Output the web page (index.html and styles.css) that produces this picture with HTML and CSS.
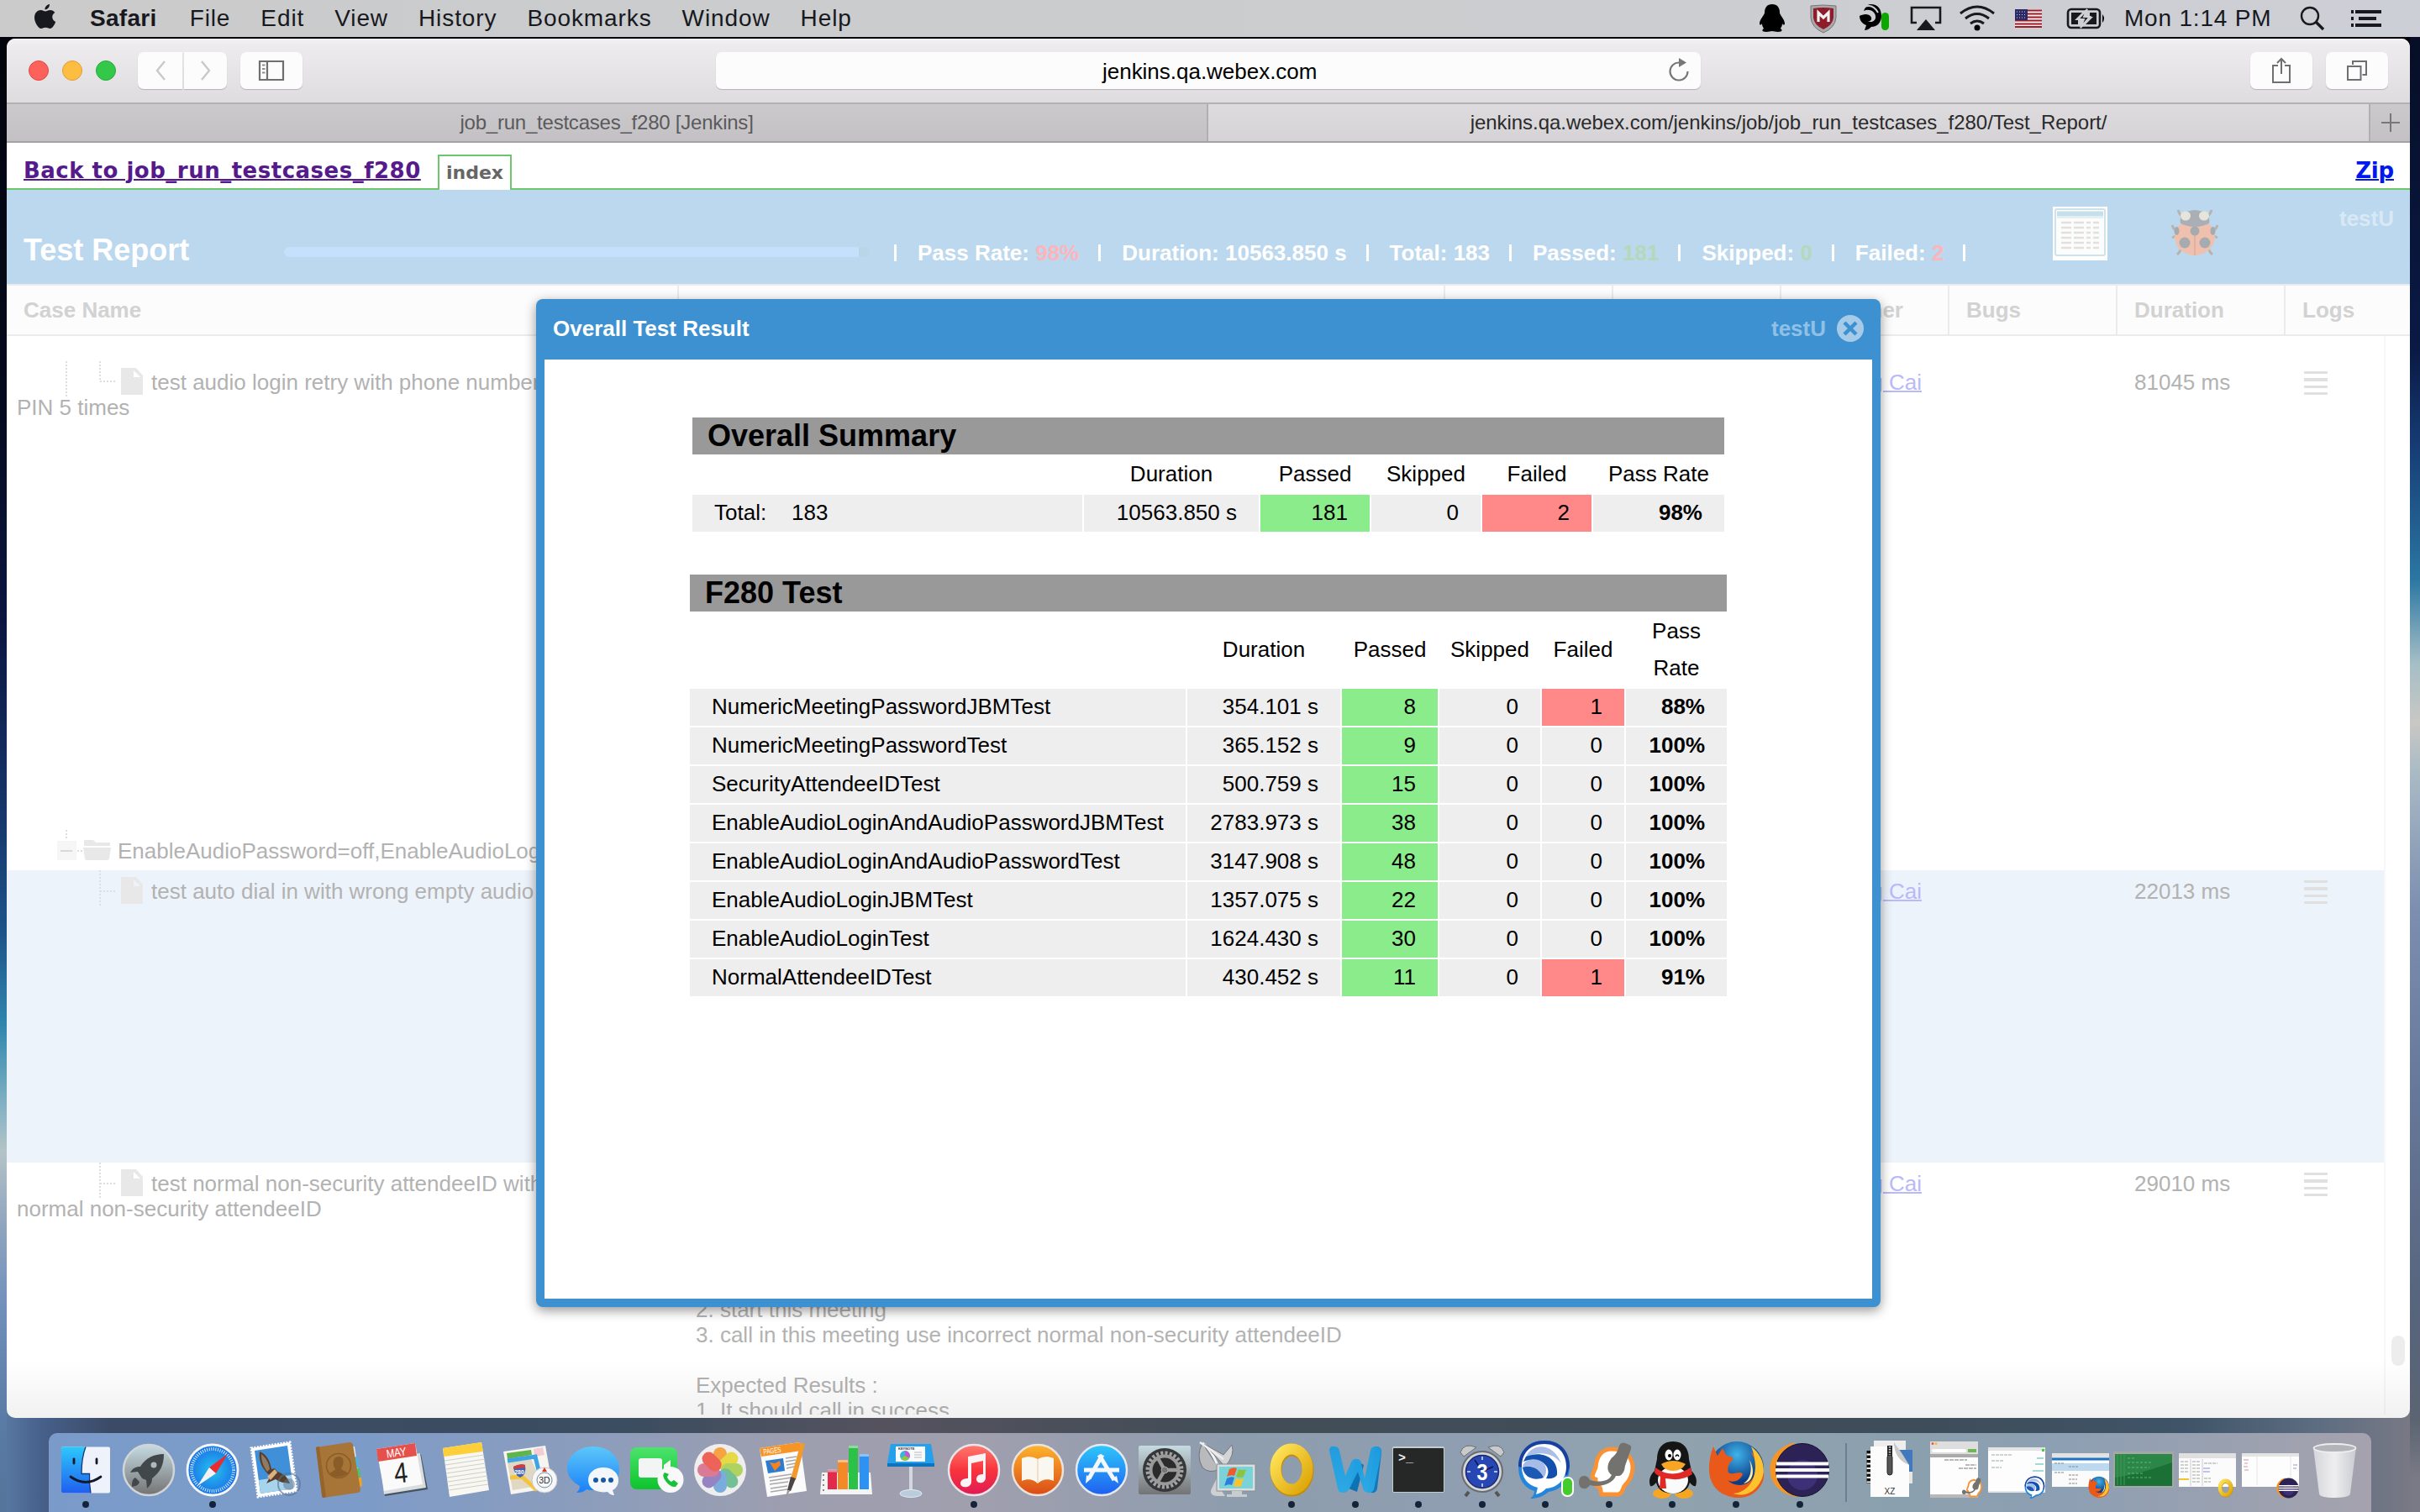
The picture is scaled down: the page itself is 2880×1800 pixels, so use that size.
FILE: index.html
```html
<!DOCTYPE html>
<html lang="en">
<head>
<meta charset="utf-8">
<title>Test Report</title>
<link rel="stylesheet" href="styles.css">
</head>
<body>
<header class="menubar">
  <svg class="apple" width="28" height="34" viewBox="0 0 28 34"><path d="M19 0c.3 3-2.500 6.500-5.500 6.500C13 3.500 16 .3 19 0zM14 8.500c1.500 0 3-1.500 6-1.500 2 0 4 1 5.300 3-4.500 2.600-3.800 9 .9 11-1.200 3.500-4 8-6.700 8-2 0-2.800-1.200-5.200-1.200S11 29 9 29C5.500 29 1 21.500 1 16 1 10 5 7 8.500 7c2.300 0 4 1.500 5.500 1.500z"/></svg>
  <nav class="menus"><b>Safari</b><span>File</span><span>Edit</span><span>View</span><span>History</span><span>Bookmarks</span><span>Window</span><span>Help</span></nav>
  <svg class="status" width="430" height="44" viewBox="2094 0 430 44">
    <path d="M2109 5c6 0 9 4 9 10 0 3 6 8 6 13 0 2-2 2-3 0 0 4-2 5-2 6 2 1 3 4-3 4-3 0-5-1-7-1s-4 1-7 1c-6 0-5-3-3-4 0-1-2-2-2-6-1 2-3 2-3 0 0-5 6-10 6-13 0-6 3-10 9-10z"/>
    <path d="M2155 7q15-2 30 0v14q-1 12-15 18-14-6-15-18z" fill="#a9a9ab" stroke="#77777b"/><path d="M2158 10q12-2 24 0v11q-1 9-12 14-11-5-12-14z" fill="#8f1c2a"/><path d="M2164 26V15l6 6 6-6v11" fill="none" stroke="#f2f2f2" stroke-width="3.200"/>
    <path d="M2226 5c9 0 13 6 13 14 0 9-6 13-12 13-3 3-6 4-8 4l2-6c-5-2-8-6-8-11 3-2 12-4 14 2 1 3-2 5-5 4 6 3 11-1 10-6-1-6-8-9-14-6 2-5 5-8 8-8z"/><path d="M2219 8q10-4 16 7" stroke="#cfd1d6" stroke-width="2" fill="none"/><rect x="2239" y="15" width="9" height="21" rx="4.500" fill="#0ca800"/>
    <path d="M2281 27h-6V9h34v18h-6" fill="none" stroke="#17191e" stroke-width="2.600"/><path d="M2281 36l11-13 11 13z" fill="#17191e"/>
    <g fill="none" stroke="#17191e" stroke-width="3"><path d="M2333 16q20-16 40 0"/><path d="M2339 22q14-11 28 0"/><path d="M2345 28q8-6 16 0"/></g><circle cx="2353" cy="33" r="3.500"/>
    <rect x="2398" y="11" width="32" height="22" fill="#f3f0f0"/><path d="M2398 12.500h32M2398 16.500h32M2398 20.500h32M2398 24.500h32M2398 28.500h32M2398 32h32" stroke="#a01a28" stroke-width="2"/><rect x="2398" y="11" width="15" height="13" fill="#2b2a66"/><path d="M2400 14h12M2400 17.500h12M2400 21h12" stroke="#c8c8e0" stroke-dasharray="1 2"/>
    <rect x="2461" y="11" width="38" height="22" rx="4" fill="none" stroke="#17191e" stroke-width="2.600"/><path d="M2502 17q4 5 0 10z"/><path d="M2465 15h13l-9 9h4v5h-8zM2495 29h-13l9-9h-4v-5h8z" fill="#17191e"/><path d="M2484 11l-11 12h7l-4 10 11-13h-7z" fill="#17191e" stroke="#cfd1d6" stroke-width="2"/>
  </svg>
  <span class="clock">Mon 1:14 PM</span>
  <svg class="search" width="100" height="44" viewBox="2736 0 100 44"><circle cx="2749" cy="19" r="10" fill="none" stroke="#17191e" stroke-width="2.400"/><path d="M2756 26l9 9" stroke="#17191e" stroke-width="3.400"/><path d="M2803 14h31M2807 22h21M2803 30h31" stroke="#17191e" stroke-width="4"/><path d="M2798 14h3M2798 22h3M2798 30h3" stroke="#17191e" stroke-width="4"/></svg>
</header>

<main class="window">
  <div class="toolbar">
    <i class="light red"></i><i class="light amber"></i><i class="light green"></i>
    <div class="nav"><span class="btn back"><svg width="14" height="26" viewBox="0 0 14 26"><path d="M12 2L3 13l9 11" fill="none" stroke="#c9c9cb" stroke-width="2.400"/></svg></span><span class="btn fwd"><svg width="14" height="26" viewBox="0 0 14 26"><path d="M2 2l9 11-9 11" fill="none" stroke="#c9c9cb" stroke-width="2.400"/></svg></span></div>
    <span class="btn side"><svg width="32" height="26" viewBox="0 0 32 26"><path d="M2 2h28v22H2zM11 2v22" fill="none" stroke="#6f6f72" stroke-width="2.200"/><path d="M5 6.500h3.500M5 11h3.500M5 15.500h3.500" stroke="#8f8f92" stroke-width="2.200"/></svg></span>
    <div class="url"><span>jenkins.qa.webex.com</span><svg width="28" height="30" viewBox="0 0 28 30"><path d="M14.500 5.500a10.500 10.500 0 1 0 10 10.500" fill="none" stroke="#77777a" stroke-width="2.200"/><path d="M14 0v11l9-5.500z" fill="#77777a"/></svg></div>
    <span class="btn share"><svg width="26" height="32" viewBox="0 0 26 32"><path d="M9 10H3v20h20V10h-6M13 20V2M8 7l5-5 5 5" fill="none" stroke="#6f6f72" stroke-width="2"/></svg></span>
    <span class="btn tabsbtn"><svg width="28" height="28" viewBox="0 0 28 28"><path d="M3 9h15.500v16H3z" fill="none" stroke="#6f6f72" stroke-width="2"/><path d="M9 7V3h16v16h-4.500" fill="none" stroke="#6f6f72" stroke-width="2"/></svg></span>
  </div>
  <div class="tabs">
    <div class="tab">job_run_testcases_f280 [Jenkins]</div>
    <div class="tab active">jenkins.qa.webex.com/jenkins/job/job_run_testcases_f280/Test_Report/</div>
    <div class="tab plus"><svg width="24" height="24" viewBox="0 0 24 24"><path d="M12 1v22M1 12h22" stroke="#77777a" stroke-width="2"/></svg></div>
  </div>

  <div class="crumbs"><a class="back-link">Back to job_run_testcases_f280</a><span class="index-tab">index</span><a class="zip">Zip</a></div>

  <div class="report-head">
    <h1>Test Report</h1>
    <div class="progress"><div></div></div>
    <div class="stats">
      <i></i><span>Pass Rate: <em class="bad">98%</em></span>
      <i></i><span>Duration: 10563.850 s</span>
      <i></i><span>Total: 183</span>
      <i></i><span>Passed: <em class="good">181</em></span>
      <i></i><span>Skipped: <em class="good">0</em></span>
      <i></i><span>Failed: <em class="bad">2</em></span>
      <i></i>
    </div>
    <svg class="report-icon" width="65" height="64" viewBox="0 0 65 64"><rect width="65" height="64" fill="#fdfefe"/><rect x="3" y="3" width="59" height="55" rx="2" fill="#fbfcfc" stroke="#cfe1e9" stroke-width="2"/><path d="M5 8.500h55" stroke="#c6dfec" stroke-width="6"/><path d="M5 13h55" stroke="#e2eff3" stroke-width="2"/><g stroke="#e4dedc" stroke-width="2.500"><path d="M10 19h45M10 25h45M10 31h45M10 37h45M10 43h45M10 49h45" stroke-dasharray="12 3 12 3 5 3 7"/></g></svg>
    <svg class="bug-icon" width="56" height="58" viewBox="0 0 56 58"><g fill="none" stroke="#b7b4ae" stroke-width="3"><path d="M14 11q-4-3-6-9M42 11q4-3 6-9M8 27q-5-1-7-7M48 27q5-1 7-7M7 32l-6 3M49 32l6 3M12 46q-1 6-5 9M44 46q1 6 5 9"/></g><ellipse cx="28" cy="34" rx="24" ry="22" fill="#f0c0ae"/><path d="M28 18v38" stroke="#dcab98" stroke-width="1.500"/><path d="M11 18q-3-14 17-16 20 2 17 16-17 8-34 0z" fill="#a9afb4"/><ellipse cx="17" cy="9" rx="6" ry="5.500" fill="#e6e5dc"/><ellipse cx="39" cy="9" rx="6" ry="5.500" fill="#e6e5dc"/><g fill="#a6abaf"><circle cx="28" cy="27" r="5.500"/><circle cx="16" cy="41" r="6.500"/><circle cx="40" cy="41" r="6.500"/><ellipse cx="6.500" cy="27" rx="3" ry="5"/><ellipse cx="49.500" cy="27" rx="3" ry="5"/></g></svg>
    <span class="brand">testU</span>
  </div>

  <div class="grid grid-head"><div>Case Name</div><div></div><div></div><div></div><div class="owner">Owner</div><div>Bugs</div><div>Duration</div><div class="last">Logs</div></div>

  <div class="rows">
    <div class="grid row r1">
      <div class="case"><div class="line"><svg width="172" height="30"><path class="dots" d="M71-10v42M111-10v24h18"/><path class="ico" d="M136-2h18l8 9v23h-26z"/><path d="M151 1v8h8z" fill="#fff"/></svg><span>test audio login retry with phone number</span></div><div class="wrap">PIN 5 times</div></div>
      <div class="steps"></div><div></div><div></div><div class="owner"><a>Yang Cai</a></div><div></div><div>81045 ms</div><div class="log"><i></i></div>
    </div>
    <div class="group"><svg width="132" height="30"><path class="dots" d="M71-10v12M84 15h8"/><path d="M60 3h23v23H60z" fill="#f6f6f6"/><path d="M64 15h14" stroke="#d5d9e0" stroke-width="2"/><path class="ico" d="M92 3q0-1 2-1h9l3 3h17v4H92zM91 11h33l-2 13q-.3 2-2 2H95q-2 0-2-2z"/></svg><span>EnableAudioPassword=off,EnableAudioLog</span></div>
    <div class="grid row r2">
      <div class="case"><div class="line"><svg width="172" height="30"><path class="dots" d="M111-10v44M111 15h18"/><path class="ico" d="M136-2h18l8 9v23h-26z"/><path d="M151 1v8h8z" fill="#edf3fa"/></svg><span>test auto dial in with wrong empty audio</span></div></div>
      <div class="steps"></div><div></div><div></div><div class="owner"><a>Yang Cai</a></div><div></div><div>22013 ms</div><div class="log"><i></i></div>
    </div>
    <div class="grid row r3">
      <div class="case"><div class="line"><svg width="172" height="30"><path class="dots" d="M111-10v44M111 15h18"/><path class="ico" d="M136-2h18l8 9v23h-26z"/><path d="M151 1v8h8z" fill="#fff"/></svg><span>test normal non-security attendeeID with</span></div><div class="wrap">normal non-security attendeeID</div></div>
      <div class="steps"><p>2. start this meeting</p><p>3. call in this meeting use incorrect normal non-security attendeeID</p><p>&nbsp;</p><p>Expected Results :</p><p>1. It should call in success</p></div><div></div><div></div><div class="owner"><a>Yang Cai</a></div><div></div><div>29010 ms</div><div class="log"><i></i></div>
    </div>
  </div>
  <div class="scroll"><i></i></div>
  <div class="fade"></div>

  <section class="modal">
    <div class="modal-head"><h2>Overall Test Result</h2><span>testU</span><svg width="32" height="32" viewBox="0 0 32 32"><circle cx="16" cy="16" r="16" fill="#a5cbe9"/><path d="M9 9l14 14M23 9L9 23" stroke="#3d91d1" stroke-width="4.500"/></svg></div>
    <div class="modal-body">
      <div class="table summary">
        <h3>Overall Summary</h3>
        <div class="th"></div><div class="th">Duration</div><div class="th">Passed</div><div class="th">Skipped</div><div class="th">Failed</div><div class="th">Pass Rate</div>
        <div class="name"><span class="total">Total:</span>183</div><div>10563.850 s</div><div class="ok">181</div><div>0</div><div class="fail">2</div><div class="rate">98%</div>
      </div>
      <div class="table suite">
        <h3>F280 Test</h3>
        <div class="th"></div><div class="th">Duration</div><div class="th">Passed</div><div class="th">Skipped</div><div class="th">Failed</div><div class="th">Pass<br>Rate</div>
        <div class="name">NumericMeetingPasswordJBMTest</div><div>354.101 s</div><div class="ok">8</div><div>0</div><div class="fail">1</div><div class="rate">88%</div>
        <div class="name">NumericMeetingPasswordTest</div><div>365.152 s</div><div class="ok">9</div><div>0</div><div>0</div><div class="rate">100%</div>
        <div class="name">SecurityAttendeeIDTest</div><div>500.759 s</div><div class="ok">15</div><div>0</div><div>0</div><div class="rate">100%</div>
        <div class="name">EnableAudioLoginAndAudioPasswordJBMTest</div><div>2783.973 s</div><div class="ok">38</div><div>0</div><div>0</div><div class="rate">100%</div>
        <div class="name">EnableAudioLoginAndAudioPasswordTest</div><div>3147.908 s</div><div class="ok">48</div><div>0</div><div>0</div><div class="rate">100%</div>
        <div class="name">EnableAudioLoginJBMTest</div><div>1357.075 s</div><div class="ok">22</div><div>0</div><div>0</div><div class="rate">100%</div>
        <div class="name">EnableAudioLoginTest</div><div>1624.430 s</div><div class="ok">30</div><div>0</div><div>0</div><div class="rate">100%</div>
        <div class="name">NormalAttendeeIDTest</div><div>430.452 s</div><div class="ok">11</div><div>0</div><div class="fail">1</div><div class="rate">91%</div>
      </div>
    </div>
  </section>
</main>

<svg class="defs" width="0" height="0">
  <defs>
    <linearGradient id="gBlue" x2="0" y2="1"><stop stop-color="#2dc8fb"/><stop offset="1" stop-color="#1f5ff0"/></linearGradient>
    <linearGradient id="gGrey" x2="0" y2="1"><stop stop-color="#c6dbe2"/><stop offset="1" stop-color="#737373"/></linearGradient>
    <linearGradient id="gGreen" x2="0" y2="1"><stop stop-color="#4ce36c"/><stop offset="1" stop-color="#0dc32c"/></linearGradient>
    <linearGradient id="gRed" x2="0" y2="1"><stop stop-color="#ff7a70"/><stop offset=".5" stop-color="#f8343c"/><stop offset="1" stop-color="#e11a55"/></linearGradient>
    <linearGradient id="gOrange" x2="0" y2="1"><stop stop-color="#fdb52c"/><stop offset="1" stop-color="#db4a16"/></linearGradient>
    <linearGradient id="gMsg" x2="0" y2="1"><stop stop-color="#5cc8fa"/><stop offset="1" stop-color="#1a80f7"/></linearGradient>
    <linearGradient id="gGold" x2="1" y2="1"><stop stop-color="#ffe45a"/><stop offset="1" stop-color="#dda408"/></linearGradient>
    <linearGradient id="gW" x2="0" y2="1"><stop stop-color="#1d9ce0"/><stop offset="1" stop-color="#27a9e6"/></linearGradient>
    <linearGradient id="gTrash" x2="1" y2="0"><stop stop-color="#d5d6da"/><stop offset=".5" stop-color="#eeeef0"/><stop offset="1" stop-color="#c9cbd1"/></linearGradient>
    <radialGradient id="gSafari"><stop stop-color="#25c3ee"/><stop offset="1" stop-color="#1a6fe6"/></radialGradient>
    <radialGradient id="gFx" cx=".5" cy=".25"><stop stop-color="#3fb4ea"/><stop offset="1" stop-color="#0d3c86"/></radialGradient>
    <symbol id="outlook" viewBox="0 0 72 72"><ellipse cx="36.500" cy="36.500" rx="19" ry="24" fill="none" stroke="#c48d08" stroke-width="14"/><ellipse cx="36" cy="35" rx="19" ry="24" fill="none" stroke="url(#gGold)" stroke-width="13"/></symbol>
    <symbol id="webex" viewBox="0 0 72 72"><path d="M35 1c19 0 30 13 30 31 0 17-10 28-25 30-6 5-12 8-22 8 3-2 5-5 5-9C10 57 4 46 4 32 4 14 16 1 35 1z" fill="#2385dc"/><path d="M35 1c19 0 30 13 30 31l-3 10L4 32C4 14 16 1 35 1z" fill="#1740a0"/><path d="M35 5c16 0 26 11 26 27 0 15-10 25-24 26-4 4-8 6-12 7l2-8C14 54 8 44 8 32 8 16 18 5 35 5z" fill="#fff"/><path d="M13 20C20 4 45 2 55 28 44 14 28 14 13 20z" fill="#a9bfe8"/><path d="M13 20c20-8 39 2 37 22-3 4-8 5-13 4C46 33 30 18 10 26z" fill="#1350ad"/><path d="M9 33c1-14 28-13 28 3 0 4-1 7-3 9-6-12-16-16-25-12z" fill="#a5bce8"/><path d="M9 33c10-4 20 1 25 12-10 4-23 1-25-12z" fill="#1c59b4"/></symbol>
    <symbol id="agent" viewBox="0 0 72 72"><path d="M39 11c15 0 25 9 25 22 0 9-3 15-9 21-4 4-2 10-8 11H27c-2-4 0-8-3-9-5 0-4-5-4-9-5-2-5-3 0-14 1-14 8-22 19-22z" fill="#fff" stroke="#fa9233" stroke-width="5"/><path d="M47 10q2-8 8-6l5 2q3 1 2 5l-7 20q-1 10-7 12h-4C40 53 24 57 13 54q-3 5-8 4-5-1-5-7 0-8 6-8 5 0 7 5c12 3 22 2 26-6-6-4-6-12-1-19 3-4 7-5 9-13z" fill="#74726f"/></symbol>
    <symbol id="firefox" viewBox="0 0 72 72"><circle cx="37" cy="34" r="32" fill="url(#gFx)"/><path d="M9 8l5 11 6-9 4 8c4 2 8 2 9 5-5 4-8 10-6 16 6 4 14-3 17 2-3 8-12 11-18 7 8 9 25 8 31-4 5-10 2-22-4-30 13 9 19 23 15 35-5 14-18 21-32 20C16 67 3 53 4 33 4 24 6 16 9 8z" fill="#e8591a"/><path d="M54 8c17 13 20 34 6 49-8 9-19 10-27 7 22-2 33-26 21-56z" fill="#fcc22f"/><path d="M52 24c4 12 1 23-7 28 10-1 15-14 7-28z" fill="#fff0a8"/></symbol>
    <symbol id="eclipse" viewBox="0 0 72 72"><path d="M31 3C-12 12-8 63 33 68 12 54 10 18 31 3z" fill="#f79524"/><circle cx="39" cy="36" r="31.500" fill="#2c2255" stroke="#15112c"/><circle cx="39" cy="42" r="18" fill="#4a3b8e" opacity=".6"/><path d="M8 28.500h62M7 36h64M8 43.500h62" stroke="#fff" stroke-width="4"/></symbol>
  </defs>
</svg>

<footer class="dock">
  <div class="app on"><svg viewBox="0 0 72 72"><rect x="7" y="8.500" width="58" height="55" rx="2" fill="#eef2fa"/><path d="M36 8.500H9q-2 0-2 2v51q0 2 2 2h33q-2-11-1.500-23H31c0-12 1-22 5-32z" fill="url(#gBlue)"/><path d="M36 8.500c-4 10-5 20-5 32h9.500q-.5 12 1.500 23" fill="none" stroke="#123a77" stroke-width="1.300"/><path d="M22 23v5M49 23v5M18 44q18 13 36 0" fill="none" stroke="#111a2a" stroke-width="2.800" stroke-linecap="round"/></svg></div>
  <div class="app"><svg viewBox="0 0 72 72"><circle cx="36" cy="36" r="30" fill="url(#gGrey)" stroke="#d2d5d7" stroke-width="2.500"/><path d="M54 17c-12 0-22 5-28 15-6 0-9 2-12 7l9-1 5 8 5 2 1 10c4-4 6-7 6-12 9-7 14-15 14-29z" fill="#42474c"/><circle cx="42" cy="30" r="3.500" fill="#adb9bd"/><path d="M20 45c-4 2-4 7-4 11 5-1 8-2 9-6z" fill="#42474c"/></svg></div>
  <div class="app on"><svg viewBox="0 0 72 72"><circle cx="36" cy="36" r="30" fill="url(#gSafari)" stroke="#f5f6f8" stroke-width="2.800"/><circle cx="36" cy="36" r="25" fill="none" stroke="#c9e8fb" stroke-width="4" stroke-dasharray="1 1.620"/><path d="M54 17L32 33l8 7z" fill="#ec2b2f"/><path d="M18 55l14-22 8 7z" fill="#f3f3f3"/></svg></div>
  <div class="app"><svg viewBox="0 0 72 72"><path d="M7 10l46-7 8 58-46 7z" fill="#fff" stroke="#fff" stroke-width="3" stroke-dasharray="2 1.500"/><path d="M11 13l39-6 7 51-39 6z" fill="#3f90d8"/><path d="M16 48l39-6 2 16-39 6z" fill="#a8d3ec"/><path d="M17 14c7 3 12 9 14 21l4-1 3 4c7 2 12 6 15 14-7-1-12-1-17-5l-11 5 5-9c-9-6-15-18-13-29z" fill="#5a3e2a"/><path d="M19 17c5 4 9 10 10 18l-3 3c-5-6-7-13-7-21z" fill="#8f7a63"/><path d="M26 44l9-9 3 4-8 9z" fill="#d9b184"/><circle cx="52" cy="53" r="13" fill="none" stroke="#59718c" stroke-width="2" opacity=".6"/><circle cx="52" cy="53" r="7" fill="#59718c" opacity=".5"/></svg></div>
  <div class="app"><svg viewBox="0 0 72 72"><path d="M46 9l8-1 7 48-8 2z" fill="#e8e8e4"/><path d="M54 20l4 1 1 12-5 1z" fill="#4cb5dc"/><path d="M56 34l4 0 1 11-5 1z" fill="#52c260"/><path d="M58 45l4 0 1 10-5 1z" fill="#f3a21f"/><path d="M8 9l40-6q3 0 4 3l9 53q0 3-3 4l-41 6q-2 0-2-3z" fill="#a87539"/><path d="M8 9l4-1 8 60-3 1q-2 0-2-3z" fill="#94642b"/><circle cx="35" cy="31" r="14.500" fill="none" stroke="#8a5d28" stroke-width="1.600"/><path d="M35 20c8 0 6 11 3 14 1 3 6 3 8 6-6 5-17 6-22 1 2-3 6-4 7-6-4-6-3-15 4-15z" fill="#8a5d28"/></svg></div>
  <div class="app"><svg viewBox="0 0 72 72"><path d="M7 26l50-9 8 42-51 8z" fill="#44535c"/><path d="M8 24l48-8 7 41-50 8z" fill="#d9dde0"/><path d="M4 11l46-7 9 49-46 8z" fill="#fafafa"/><path d="M4 11l46-7 2 15-46 7z" fill="#e6504c"/><text x="28" y="20" text-anchor="middle" font-size="14" fill="#fff" transform="rotate(-8 28 18)" textLength="24" lengthAdjust="spacingAndGlyphs">MAY</text><text x="33" y="51" text-anchor="middle" font-size="34" fill="#222" transform="rotate(-6 33 40)" textLength="16" lengthAdjust="spacingAndGlyphs">4</text></svg></div>
  <div class="app"><svg viewBox="0 0 72 72"><path d="M8 10l46-7 9 57-47 8z" fill="#f8f7f2"/><path d="M8 10l46-7 2 11-47 6z" fill="#fdcf3b"/><path d="M10 25l47-7M11 30l47-7M12 35l47-7M12 40l47-7M13 45l47-7M14 50l47-7M15 55l47-7M15 60l47-7" stroke="#cfcfca" stroke-width="1.200"/></svg></div>
  <div class="app"><svg viewBox="0 0 72 72"><path d="M4 14l50-7 9 50-50 8z" fill="#f6f5ef"/><path d="M8 16l29-4 1 6-29 5z" fill="#5fb549"/><path d="M40 11l11-2 2 9-12 2z" fill="#f3ccd4"/><path d="M9 27l28-4 14 31-36 6z" fill="#e1d8c4"/><path d="M9 25l33-5 9 37" fill="none" stroke="#3ea4e6" stroke-width="5"/><path d="M12 45l14-1 18 16" fill="none" stroke="#f6c33c" stroke-width="5"/><path d="M16 32q8-4 14-2 2 12-6 15-7-3-8-13z" fill="#3d63b5"/><path d="M16 32q8-4 14-2v3l-14 2z" fill="#cf3c44"/><text x="23" y="41" text-anchor="middle" font-size="7" font-weight="bold" fill="#fff">280</text><circle cx="53" cy="48" r="15" fill="#f7f7f7" stroke="#c7c7c7"/><circle cx="53" cy="48" r="9" fill="none" stroke="#6b8fa0"/><text x="53" y="52" text-anchor="middle" font-size="10.500" fill="#333">3D</text><path d="M50 38l3-5 3 5z" fill="#d32"/></svg></div>
  <div class="app"><svg viewBox="0 0 72 72"><path d="M36 8c17 0 31 11 31 27S54 60 38 60c-4 0-7 0-10-1-3 3-7 4-12 4 3-3 4-5 4-8C11 50 5 43 5 34 5 19 19 8 36 8z" fill="url(#gMsg)"/><path d="M48 33c10 0 18 6 18 15 0 6-3 10-7 12l2 6c-3 0-5-1-8-4-13 2-23-4-23-14 0-9 8-15 18-15z" fill="#f3f7fb"/><g fill="#1459a8"><circle cx="39" cy="48" r="3"/><circle cx="48" cy="48" r="3"/><circle cx="57" cy="48" r="3"/></g></svg></div>
  <div class="app"><svg viewBox="0 0 72 72"><rect x="4" y="9" width="56" height="50" rx="8" fill="url(#gGreen)"/><rect x="14" y="22" width="28" height="23" rx="3" fill="#f2f5f3"/><path d="M44 30l8-6v17l-8-5z" fill="#f2f5f3"/><circle cx="52" cy="47.500" r="15.500" fill="#f8f9f8"/><path d="M45 39q-4 3 1 10 6 8 12 7l3-4-5-4-3 2q-4-2-5-6l2-3z" fill="#17c23a"/></svg></div>
  <div class="app"><svg viewBox="0 0 72 72"><circle cx="36" cy="36" r="31" fill="#efeeee"/><g opacity=".88"><rect x="28" y="9" width="16" height="26" rx="8" fill="#f8992c"/><rect x="28" y="9" width="16" height="26" rx="8" fill="#e7d62f" transform="rotate(45 36 36)"/><rect x="28" y="9" width="16" height="26" rx="8" fill="#a8cf4b" transform="rotate(90 36 36)"/><rect x="28" y="9" width="16" height="26" rx="8" fill="#62b98a" transform="rotate(135 36 36)"/><rect x="28" y="9" width="16" height="26" rx="8" fill="#6aa5dc" transform="rotate(180 36 36)"/><rect x="28" y="9" width="16" height="26" rx="8" fill="#8a75bb" transform="rotate(225 36 36)"/><rect x="28" y="9" width="16" height="26" rx="8" fill="#d66b8c" transform="rotate(270 36 36)"/><rect x="28" y="9" width="16" height="26" rx="8" fill="#ee5044" transform="rotate(315 36 36)"/></g></svg></div>
  <div class="app"><svg viewBox="0 0 72 72"><path d="M7 10l48-7 8 58-47 7z" fill="#fbfbfb"/><path d="M7 10l48-7 2 10-48 7z" fill="#f79426"/><text x="12" y="17.500" font-size="9" fill="#fff" textLength="21" lengthAdjust="spacingAndGlyphs" transform="rotate(-8 12 17)">PAGES</text><path d="M14 25l21-3 2 15-20 3z" fill="#2d7bd0"/><path d="M19 27l6 1 6-3 1 5-7 7z" fill="#f58220"/><path d="M38 22l13-2M38 26l12-2M39 30l11-2M39 34l9-2M18 45l27-4M19 49l26-4M19 53l22-3M20 58l20-3M20 62l20-3" stroke="#a9a9a9" stroke-width="1.500"/><path d="M56 4l5 1-11 43-6-2z" fill="#f29a2b"/><path d="M44 44l6 2-6 15-4-1z" fill="#4a4645"/><path d="M40 60l3 1-5 8z" fill="#999"/></svg></div>
  <div class="app"><svg viewBox="0 0 72 72"><path d="M6 39h58l2 26H4z" fill="#f4f4f4"/><rect x="13" y="36" width="11" height="23" fill="#e02b4d"/><rect x="25" y="24" width="12" height="35" fill="#f48a27"/><rect x="38" y="7" width="11" height="52" fill="#2cc147"/><rect x="51" y="17" width="11" height="42" fill="#2d92f2"/><path d="M13 37h11M25 25.500h12M38 8.500h11M51 18.500h11" stroke="#fff" stroke-opacity=".45" stroke-width="3"/><path d="M7 42h2M7 48h2M7 54h2M7 60h2" stroke="#888" stroke-width="2"/></svg></div>
  <div class="app"><svg viewBox="0 0 72 72"><path d="M34 31h4v32h-4z" fill="#d2d8de"/><ellipse cx="36" cy="64" rx="13" ry="4.500" fill="#b9cddd" stroke="#e4ebf0"/><path d="M12 5h48l4 23H8z" fill="#24a0ec"/><path d="M8 28h56v4H8z" fill="#0f74bd"/><rect x="18" y="8" width="35" height="18" fill="#f8fafb"/><text x="21" y="12" font-size="4" font-weight="bold" fill="#333">KEYNOTE</text><circle cx="29" cy="19" r="6" fill="#35b5e2"/><path d="M29 19v-6a6 6 0 0 1 5 9z" fill="#c65ad0"/><path d="M29 19l5 3a6 6 0 0 1-10 0z" fill="#8ecb3b"/><path d="M40 15h9M40 18h9M40 21h9" stroke="#bbb"/></svg></div>
  <div class="app on"><svg viewBox="0 0 72 72"><circle cx="36" cy="36" r="30" fill="url(#gRed)" stroke="#e8e6ea" stroke-width="2.500"/><path d="M29 20l21-4v29c0 8-11 8-11 2 0-4 3-6 8-6V25l-14 3v22c0 8-13 8-13 2 0-4 4-6 9-6z" fill="#fbf4f5"/></svg></div>
  <div class="app"><svg viewBox="0 0 72 72"><circle cx="36" cy="36" r="30" fill="url(#gOrange)" stroke="#eae3df" stroke-width="2.500"/><path d="M36 23c-5-3-12-4-19-1v27c7-3 14-2 19 3 5-5 12-6 19-3V22c-7-3-14-2-19 1z" fill="#faf6f0"/><path d="M36 23v29" stroke="#e7c8a4"/></svg></div>
  <div class="app"><svg viewBox="0 0 72 72"><circle cx="36" cy="36" r="30" fill="url(#gBlue)" stroke="#e4e9f2" stroke-width="2.500"/><path d="M15 36h42M37 18L21 46M33 18l18 30" fill="none" stroke="#f4f7fb" stroke-width="5"/><path d="M18 42l-1 10 7-6zM48 46l8 6-2-9z" fill="#f4f7fb"/></svg></div>
  <div class="app"><svg viewBox="0 0 72 72"><rect x="5" y="7" width="62" height="58" rx="2" fill="url(#gGrey)"/><circle cx="36" cy="36" r="26" fill="#35373a"/><circle cx="36" cy="36" r="20" fill="none" stroke="#a3a3a3" stroke-width="5" stroke-dasharray="3 2.230"/><circle cx="36" cy="36" r="16.500" fill="#2b2b2b" stroke="#999" stroke-width="4"/><path d="M36 36h16M36 36L28 22M36 36l-8 14" stroke="#999" stroke-width="4.500"/><circle cx="36" cy="36" r="4" fill="#777" stroke="#aaa"/></svg></div>
  <div class="app"><svg viewBox="0 0 72 72"><path d="M26 38L16 58q-4 8 6 9h10l-4-6 4-20z" fill="#cfd0d2"/><path d="M5 4q-8 15 0 29 8 8 20 2z" fill="#b9babd" stroke="#737477"/><path d="M5 4q10 6 20 31" fill="none" stroke="#f1f1f1" stroke-width="3"/><path d="M7 5l23 13 10-12q4 12-8 26z" fill="#d3d4d6" stroke="#77787b"/><path d="M2 3l28 20" stroke="#ededed" stroke-width="2.500"/><rect x="22" y="29" width="46" height="32" fill="#d9dee0" stroke="#888d90"/><rect x="25" y="32" width="40" height="26" fill="#7ad3d8"/><path d="M37 35q5-3 9-1l-3 9q-4-2-9 1z" fill="#f05a28"/><path d="M48 35q5 2 9 0l-3 9q-5 2-9 0z" fill="#8bc53f"/><path d="M34 46q5-3 9-1l-3 9q-4-2-9 1z" fill="#2d7ed6"/><path d="M45 46q5 2 9 0l-3 9q-5 2-9 0z" fill="#fbc42b"/><path d="M40 61h12v4h6v3H34v-3h6z" fill="#c9ccce"/></svg></div>
  <div class="app on"><svg viewBox="0 0 72 72"><use href="#outlook"/></svg></div>
  <div class="app on"><svg viewBox="0 0 72 72"><path d="M36 24l10 6-8 32-10-4z" fill="#0d73b5"/><path d="M60 8q8 0 7 8l-5 42q-1 6-7 5l-4-1z" fill="#1379bd"/><path d="M5 13q0-6 6-5 5 0 6 5l7 30 7-16q2-5 8-4 4 1 4 5l4 18 7-33q1-5 6-5 7 0 7 7l-9 44q-2 5-7 4-5-1-6-5l-6-20-10 20q-2 5-8 5-5 0-6-5z" fill="url(#gW)" opacity=".95"/></svg></div>
  <div class="app on"><svg viewBox="0 0 72 72"><rect x="5" y="8" width="62" height="55" rx="2" fill="#c3ccce"/><rect x="6" y="10" width="60" height="52" rx="1" fill="#262727"/><text x="12" y="26" font-family="Liberation Mono" font-size="15" font-weight="bold" fill="#f2f2f2">&gt;_</text></svg></div>
  <div class="app on"><svg viewBox="0 0 72 72"><path d="M20 62l-4 5M52 62l4 5" stroke="#555" stroke-width="4"/><path d="M10 15Q14 3 29 9L14 20zM62 15Q58 3 43 9l15 11z" fill="#c9cacc" stroke="#6d6e70"/><circle cx="36" cy="38" r="24" fill="#d4d6da" stroke="#6a6c70" stroke-width="2"/><circle cx="36" cy="38" r="19.500" fill="#2747b5" stroke="#1c2a6b" stroke-width="1.500"/><g stroke="#dfe5ff" stroke-width="1.500"><path d="M36 20v4M36 52v4M18 38h4M50 38h4"/></g><path d="M27 24l9 14 13-6" fill="none" stroke="#10194a" stroke-width="1.500"/><text x="36" y="48" text-anchor="middle" font-size="28" font-weight="bold" fill="#fff" textLength="13" lengthAdjust="spacingAndGlyphs">3</text></svg></div>
  <div class="app on"><svg viewBox="0 0 72 72"><use href="#webex"/><rect x="56" y="45" width="13" height="22" rx="6" fill="#44cc2c" stroke="#fff" stroke-width="2"/></svg></div>
  <div class="app on"><svg viewBox="0 0 72 72"><use href="#agent"/></svg></div>
  <div class="app on"><svg viewBox="0 0 72 72"><ellipse cx="24" cy="64" rx="11" ry="6" fill="#f6a622"/><ellipse cx="50" cy="64" rx="11" ry="6" fill="#f6a622"/><path d="M37 2c13 0 19 9 19 21l3 14c6 6 7 12 5 18-3 1-5-2-7-4-2 8-8 13-20 13s-18-5-20-13c-2 2-4 5-7 4-2-6-1-12 5-18l3-14C18 11 24 2 37 2z" fill="#151515"/><ellipse cx="37" cy="48" rx="18" ry="16" fill="#fafafa"/><ellipse cx="32" cy="18" rx="4.500" ry="6.500" fill="#fff"/><ellipse cx="42" cy="18" rx="4.500" ry="6.500" fill="#fff"/><circle cx="33" cy="19" r="2"/><path d="M40 20q2-4 4 0" stroke="#000" fill="none" stroke-width="1.500"/><path d="M23 29q14-8 29 0-5 8-15 8t-14-8z" fill="#f6a622"/><path d="M16 33q20 15 42 0l2 8q-11 7-23 6l-9-1 1 12h-8l1-14q-6-3-7-5z" fill="#df2a25"/></svg></div>
  <div class="app on"><svg viewBox="0 0 72 72"><use href="#firefox"/></svg></div>
  <div class="app on"><svg viewBox="0 0 72 72"><use href="#eclipse"/></svg></div>
  <div class="sep"></div>
  <div class="app"><svg viewBox="0 0 72 72"><path d="M17 1h38v30H17z" fill="#eee"/><path d="M9 13h40v38H9z" fill="#fff"/><path d="M11 13v39" stroke="#111" stroke-width="5" stroke-dasharray="3.500 2"/><path d="M34 12h29v40H34z" fill="#e9e4de"/><path d="M40 12h23v26H50z" fill="#4278bd"/><path d="M13 8h30q4 10 16 22v38H13z" fill="#fcfcfc"/><path d="M41 3q0 20 18 27-8-14-18-27z" fill="#c9c9c9"/><path d="M36 7v26" stroke="#222" stroke-width="6"/><path d="M36 8v22" stroke="#ccc" stroke-width="2.500" stroke-dasharray="1.500 1.500"/><rect x="33" y="18" width="6" height="24" rx="3" fill="#555" stroke="#222"/><text x="36" y="65" text-anchor="middle" font-size="10" fill="#333">XZ</text></svg></div>
  <div class="app"><svg viewBox="0 0 72 72"><rect x="8" y="2" width="57" height="67" fill="#fdfdfd"/><path d="M8 2h57v15H8z" fill="#dedede"/><path d="M8 17h57v4H8z" fill="#aaa"/><rect x="10" y="11" width="41" height="4" rx="2" fill="#fff"/><rect x="53" y="11" width="10" height="4" fill="#6bb950"/><circle cx="11" cy="4.500" r="1.500" fill="#e55"/><circle cx="15" cy="4.500" r="1.500" fill="#eb3"/><path d="M25 24h27M50 30h13M42 34h21" stroke="#777" stroke-width="1.200" stroke-dasharray="5 1"/><path d="M8 65h57v4H8z" fill="#b8b8b8"/><use href="#agent" x="46" y="44" width="26" height="26"/></svg></div>
  <div class="app"><svg viewBox="0 0 72 72"><rect x="2" y="9" width="68" height="54" fill="#fdfdfd"/><path d="M2 9h68v4H2z" fill="#e4e4e4"/><rect x="66" y="11" width="3" height="3" fill="#4c4"/><g stroke="#9aa" stroke-width="1.200"><path d="M6 18h25M6 25h14M6 33h12" stroke-dasharray="4 1"/></g><path d="M60 22h8M58 29h10M55 37h13" stroke="#8cc" stroke-width="1.500"/><path d="M2 62h68" stroke="#ccc"/><use href="#webex" x="44" y="43" width="28" height="28"/></svg></div>
  <div class="app"><svg viewBox="0 0 72 72"><rect x="2" y="16" width="68" height="40" fill="#fbfbfb"/><path d="M2 16h68v6H2z" fill="#e2e2e2"/><path d="M2 23h68" stroke="#1b75c4" stroke-width="3"/><path d="M2 28h68v9H2z" fill="#bcd9f0"/><path d="M5 28h12M22 32h12M5 39h12M22 42h12M22 47h10M22 52h10" stroke="#888" stroke-dasharray="3 1"/><use href="#firefox" x="44" y="43" width="27" height="27"/></svg></div>
  <div class="app"><svg viewBox="0 0 72 72"><rect x="0" y="14" width="72" height="43" fill="#a4a8a4"/><path d="M2 17h68v38H2z" fill="#2b8647"/><path d="M2 45q30-4 68-18v28H2z" fill="#1b7035"/><path d="M5 17v37M9 17v37M13 17v37" stroke="#419a58"/><path d="M17 22h8M17 27h30M17 33h26M17 40h20M17 45h30" stroke="#6fc77f" stroke-width=".8" stroke-dasharray="3 2"/></svg></div>
  <div class="app"><svg viewBox="0 0 72 72"><rect x="2" y="16" width="68" height="40" fill="#fbfbfb"/><path d="M2 16h68v6H2z" fill="#e0e0e0"/><path d="M2 47h12" stroke="#f2c52a" stroke-width="2"/><path d="M16 23v32M30 23v32" stroke="#ccc"/><g stroke="#999" stroke-width=".9"><path d="M4 26h10M4 30h10M4 34h10M4 38h10M18 26h10M18 30h10M18 34h10M18 38h10M18 42h10M18 46h10M18 50h10M32 28h16M32 46h8M32 50h8" stroke-dasharray="4 1"/></g><path d="M31 34h8M31 38h8" stroke="#88e"/><use href="#outlook" x="45" y="45" width="25" height="25"/></svg></div>
  <div class="app"><svg viewBox="0 0 72 72"><rect x="2" y="16" width="68" height="40" fill="#fdfdfd"/><path d="M2 16h68v4H2z" fill="#e4e4e4"/><path d="M20 20v34M60 20v36" stroke="#e4e4e4"/><path d="M4 24h6M5 28h4M4 32h5M5 36h5" stroke="#c99"/><path d="M63 30h5M63 34h4" stroke="#99c"/><use href="#eclipse" x="43" y="44" width="27" height="27"/></svg></div>
  <div class="app"><svg viewBox="0 0 72 72"><path d="M11 9h51l-7 55q0 5-18.500 5T18 64z" fill="url(#gTrash)"/><ellipse cx="36.500" cy="10" rx="25" ry="5" fill="#b3b4b9" stroke="#eceef0" stroke-width="1.800"/></svg></div>
</footer>
</body>
</html>
```
FILE: styles.css
```css
* { box-sizing: border-box; }
html { height: 1800px; overflow: hidden; }
body {
  margin: 0; width: 2880px; height: 1800px; overflow: hidden;
  display: flex; flex-direction: column;
  font-family: "Liberation Sans", Arial, sans-serif; font-size: 26px; color: #000;
  background:
    linear-gradient(180deg, #02030a 0, #050b1f 500px, #0b1640 740px, #17366a 970px, #1d5489 1110px, #2f86ad 1220px, #86b3c4 1320px, #b4c3c7 1370px, #8fa5bf 1460px, #6f8fbb 1560px, #5a7ba5 1690px, #54749b 1800px) left top / 8px 100% no-repeat,
    linear-gradient(180deg, #060c22 0, #0a1a46 420px, #173f78 540px, #2b77a3 690px, #a5bec6 790px, #c9c8c4 860px, #a9bac5 920px, #7c8fb0 1080px, #66789a 1300px, #56647c 1560px, #5b6472 1690px, #7a7a86 1760px) right top / 12px 100% no-repeat,
    linear-gradient(90deg, #5a7ba5 0, #46608a 50px, #3b4b66 130px, #3b4d60 750px, #55525e 1050px, #424d57 1450px, #3e4d5a 2300px, #3f5468 2600px, #5d6d82 2760px, #7b7a84 2880px) left bottom / 100% 200px no-repeat,
    #02030a;
}
svg { display: block; overflow: visible; flex: none; }
.defs { position: absolute; }

.menubar { height: 44px; flex: none; display: flex; align-items: center; padding-left: 40px; font-size: 28px; color: #17191e; background: linear-gradient(90deg, #cbcbcc, #cacccd 50%, #cdcfd6); }
.apple { margin-right: 39px; fill: #17191e; }
.menus { display: flex; gap: 36px; letter-spacing: .9px; width: 1987px; }
.menus b { letter-spacing: .3px; margin-right: 3px; }
.status { margin-right: 4px; }
.clock { letter-spacing: .8px; width: 208px; white-space: nowrap; }

.window { position: relative; width: 2860px; height: 1642px; flex: none; margin: 2px 0 0 8px; border-radius: 10px; overflow: hidden; background: #fff; }
.toolbar { height: 78px; display: flex; align-items: center; padding-left: 26px; border-bottom: 2px solid #b3b1b3; background: linear-gradient(#f3f1f4, #edebee 8px, #dedcdf); }
.light { width: 24px; height: 24px; border-radius: 50%; margin-right: 16px; border: 1px solid; }
.red { background: #fc615c; border-color: #df4744; }
.amber { background: #fdbd41; border-color: #de9f34; }
.green { background: #34c84a; border-color: #27a933; }
.btn { height: 44px; border-radius: 7px; background: #fcfcfc; box-shadow: 0 1px 1px #b5b3b6; display: flex; align-items: center; justify-content: center; }
.nav { display: flex; gap: 2px; margin: 0 16px 0 10px; }
.back { width: 53px; border-radius: 7px 0 0 7px; }
.fwd { width: 51px; border-radius: 0 7px 7px 0; }
.side { width: 74px; }
.url { width: 1172px; height: 44px; margin: 0 654px 0 492px; border-radius: 7px; background: #fcfcfc; box-shadow: 0 1px 1px #b5b3b6; display: flex; align-items: center; padding: 0 12px 0 460px; justify-content: space-between; }
.url span { padding-top: 2px; letter-spacing: -.02px; }
.share { width: 74px; margin-right: 16px; }
.tabsbtn { width: 74px; }
.tabs { height: 46px; display: flex; font-size: 24px; letter-spacing: -.22px; border-bottom: 2px solid #a5a2a6; }
.tab { width: 1430px; display: flex; align-items: center; justify-content: center; border-right: 2px solid #b1afb2; color: #5a5a5c; background: linear-gradient(#cbc9cb, #c3c1c3); }
.tab.active { width: 1383px; letter-spacing: -.04px; color: #2a2a2b; background: linear-gradient(#dddbde, #d5d3d6); }
.tab.plus { width: 47px; border: 0; }

.crumbs { height: 56px; display: flex; padding: 0 20px; border-bottom: 2px solid #6cc76a; font-family: "DejaVu Sans", sans-serif; font-weight: bold; line-height: 30px; }
.crumbs a { padding-top: 18px; font-size: 26px; text-decoration: underline; text-decoration-thickness: 2px; }
.back-link { color: #551a8b; width: 493px; letter-spacing: .5px; white-space: nowrap; }
.index-tab { width: 88px; height: 42px; margin-top: 14px; padding-top: 5px; font-size: 22px; text-align: center; color: #666; border: 2px solid #6cc76a; border-bottom: 0; background: #fff; z-index: 1; }
.crumbs .zip { margin-left: auto; margin-right: -1px; letter-spacing: -.2px; color: #0018f0; }

.report-head { height: 114px; display: flex; padding-left: 20px; background: #bcd8ee; border-bottom: 2px solid #ebebeb; color: #fff; font-weight: bold; }
.report-head h1 { width: 310px; margin: 0; padding-top: 51px; font-size: 36px; line-height: 42px; }
.progress { width: 696px; height: 12px; margin: 68px 30px 0 0; border-radius: 6px; background: #b9d5e8; overflow: hidden; }
.progress div { width: 684px; height: 12px; background: #c5e0fd; }
.stats { width: 1379px; display: flex; gap: 24px; padding-top: 60px; line-height: 30px; white-space: nowrap; }
.stats i { width: 3px; height: 20px; margin-top: 5px; background: #fff; flex: none; }
.stats span { margin: 0 -1px 0 1px; }
.stats em { font-style: normal; }
.bad { color: #fbb5bb; }
.good { color: #b4d8b9; }
.report-icon { margin: 20px 76px 0 0; }
.bug-icon { margin: 22px 144px 0 0; }
.brand { padding-top: 19px; line-height: 30px; color: #d9e8f5; }

.grid { display: grid; grid-template-columns: 800px 912px 200px 200px 200px 200px 200px 148px; }
.grid-head { height: 60px; background: #fcfcfc; border-bottom: 2px solid #ebebeb; color: #d2d2d2; font-weight: bold; line-height: 30px; }
.grid-head > div { padding: 14px 0 0 20px; border-right: 2px solid #ebebeb; }
.grid-head .last { border: 0; }
.grid-head .owner { padding: 14px 53px 0 0; text-align: right; }
.rows { width: 2831px; height: 1284px; padding-top: 29px; overflow: hidden; color: #b2b2b2; line-height: 30px; border-right: 2px solid #f7f7f7; }
.row { padding-top: 11px; white-space: nowrap; }
.row > div { padding-left: 20px; }
.row .case { padding: 0; overflow: visible; }
.line { display: flex; }
.wrap { padding-left: 12px; }
.row .owner { padding-left: 0; text-align: right; padding-right: 33px; }
.owner a { color: #b9b9fb; text-decoration: underline; text-decoration-thickness: 2px; }
.r1 { height: 557px; }
.group { height: 50px; padding-top: 12px; display: flex; }
.r2 { height: 348px; padding-top: 10px; background: #edf3fa; }
.r3 { height: 300px; padding-top: 10px; }
.row > .steps { padding-top: 150px; }
.steps p { margin: 0; }
.dots { fill: none; stroke: #dedede; stroke-width: 2; stroke-dasharray: 2 2; }
.ico { fill: #e8e8e8; }
.log i { display: block; width: 28px; height: 30px; margin-left: 2px; background: repeating-linear-gradient(transparent 0 2px, #e0e0e0 2px 5.500px, transparent 5.500px 8.300px); }
.scroll { position: absolute; right: 6px; top: 1544px; }
.scroll i { display: block; width: 16px; height: 36px; border-radius: 8px; background: #ededed; }
.fade { position: absolute; left: 0; right: 0; bottom: 0; height: 70px; background: linear-gradient(rgba(0,0,0,0), rgba(0,0,0,.055)); }

.modal { position: absolute; left: 630px; top: 310px; width: 1600px; height: 1200px; padding: 0 10px 10px; border-radius: 8px; background: #3d91d1; box-shadow: 0 4px 14px rgba(0,0,0,.42); }
.modal-head { height: 72px; display: flex; align-items: center; padding: 0 10px 2px; color: #fff; font-weight: bold; }
.modal-head h2 { margin: 0; font-size: 26px; flex: 1; }
.modal-head span { color: #8fc0e6; margin-right: 13px; }
.modal-body { height: 1118px; padding-top: 69px; background: #fff; }
.table { display: grid; gap: 2px; line-height: 42px; }
.table > div { height: 44px; padding-right: 26px; text-align: right; background: #eee; white-space: nowrap; }
.table > .th { height: auto; padding: 0 0 2px; text-align: center; background: none; align-self: center; }
.table > .name { text-align: left; padding-left: 26px; }
.table h3 { grid-column: 1 / -1; margin: 0; height: 44px; padding-left: 18px; font-size: 36px; line-height: 44px; background: #999; }
.table > .ok { background: #8bec8b; }
.table > .fail { background: #ff8888; }
.table > .rate { font-weight: bold; }
.total { display: inline-block; width: 92px; }
.summary { width: 1228px; margin: 0 0 51px 176px; grid-template: 44px 44px 44px / 464px 208px 130px 130px 130px 156px; }
.suite { width: 1234px; margin-left: 173px; grid-template-columns: 590px 182px 114px 120px 98px 120px; grid-template-rows: 44px 88px; }
.suite > .th { line-height: 44px; margin-top: -2px; padding: 0; }

.dock { width: 2764px; height: 94px; margin: 18px 0 0 58px; padding: 8px 0 0 6px; display: flex; border-radius: 10px 10px 0 0; background: linear-gradient(90deg, #7a9bc9 0, #7c9bc9 350px, #8e9dba 680px, #9d9eaf 880px, #a09fae 1100px, #8d9dae 1420px, #8f9fb1 1700px, #91a2ae 1900px, #8ba0ae 2200px, #8d9fb3 2400px, #a5a2ae 2764px); }
.app { width: 75.560px; flex: none; display: flex; flex-direction: column; align-items: center; font-family: "Liberation Sans", sans-serif; }
.app svg { width: 72px; height: 72px; }
.app.on::after { content: ""; width: 8px; height: 8px; margin-top: 1px; border-radius: 50%; background: #14233a; }
.sep { width: 2px; height: 70px; margin: 4px 13px 0 17px; background: #6c7f92; }
```
